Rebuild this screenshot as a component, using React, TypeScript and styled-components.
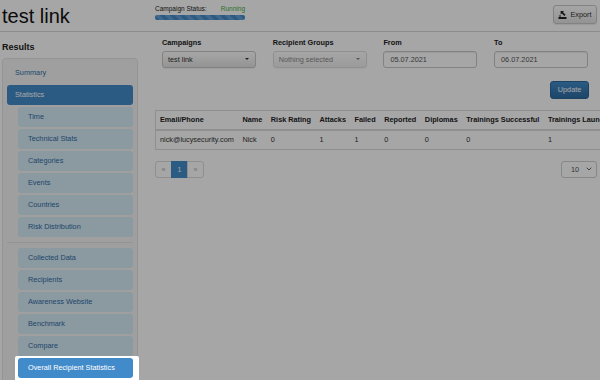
import React from "react";
import styled, { createGlobalStyle } from "styled-components";

const GlobalStyle = createGlobalStyle`
    html, body {
        margin: 0;
        padding: 0;
        background: #fff;
        overflow: hidden;
        font-family: "Liberation Sans", Arial, sans-serif;
        color: #333;
    }
`;

const Page = styled.div`
    width: 600px;
    min-height: 380px;
`;

const Header = styled.header`
    display: grid;
    grid-template-columns: 155px 1fr auto;
    align-items: start;
    height: 31px;
    border-bottom: 1px solid #d8d8d8;
`;

const Title = styled.h1`
    margin: 6px 0 0 2px;
    font-size: 20px;
    line-height: 20px;
    font-weight: normal;
    color: #111;
`;

const Status = styled.div`
    width: 90px;
    margin-top: 5px;
`;

const StatusRow = styled.div`
    display: flex;
    justify-content: space-between;
    font-size: 6.5px;
    line-height: 8px;
    color: #222;
`;

const Running = styled.span`
    color: #3fae3f;
`;

const ProgressBar = styled.div`
    margin-top: 1.5px;
    height: 5px;
    border-radius: 2px;
    background-color: #428bca;
    background-image: linear-gradient(
        45deg,
        rgba(255, 255, 255, 0.18) 25%,
        transparent 25%,
        transparent 50%,
        rgba(255, 255, 255, 0.18) 50%,
        rgba(255, 255, 255, 0.18) 75%,
        transparent 75%,
        transparent
    );
    background-size: 10px 10px;
`;

const ExportButton = styled.button`
    display: flex;
    align-items: center;
    justify-content: center;
    gap: 3px;
    width: 44px;
    height: 19px;
    margin: 5px 3px 0 0;
    padding: 0;
    border: 1px solid #c8c8c8;
    border-radius: 3px;
    background: linear-gradient(#fff, #e3e3e3);
    box-shadow: 0 1px 1px rgba(0, 0, 0, 0.08);
    font-family: inherit;
    font-size: 7.3px;
    color: #333;
`;

const Body = styled.div`
    display: grid;
    grid-template-columns: 155px 1fr;
`;

const Sidebar = styled.aside`
    padding-left: 2px;
    width: 136px;
`;

const SideTitle = styled.h4`
    margin: 9px 0 0;
    font-size: 9px;
    line-height: 12px;
    font-weight: bold;
    color: #222;
`;

const Panel = styled.nav`
    display: flex;
    flex-direction: column;
    gap: 2px;
    margin-top: 5px;
    padding: 4px 4px 6px;
    border: 1px solid #e3e3e3;
    border-radius: 4px;
    background: #f5f5f5;
`;

const NavItem = styled.div<{ $active?: boolean }>`
    height: 20px;
    line-height: 20px;
    padding-left: 8px;
    border-radius: 3px;
    font-size: 7.3px;
    white-space: nowrap;
    color: ${(p) => (p.$active ? "#fff" : "#2f6ea6")};
    background: ${(p) => (p.$active ? "#428bca" : "transparent")};
`;

const SubItem = styled(NavItem)`
    margin-left: 11px;
    padding-left: 10px;
    background: ${(p) => (p.$active ? "#428bca" : "#d6ebf6")};
`;

const Divider = styled.div`
    height: 1px;
    margin: 3px 0;
    background: #e4e4e4;
`;

const Highlight = styled.div`
    position: relative;
    z-index: 11;
    margin: -2px -6px -4px 8px;
    padding: 2px 6px 4px 3px;
    background: #fff;
    border-radius: 2px;

    & > ${SubItem} {
        margin-left: 0;
    }
`;

const Main = styled.main`
    overflow: hidden;
    padding-top: 6px;
`;

const Filters = styled.div`
    display: grid;
    grid-template-columns: repeat(4, 94px);
    column-gap: 16.7px;
    padding-left: 7px;
`;

const Label = styled.label`
    display: block;
    margin-bottom: 2.5px;
    font-size: 7.3px;
    line-height: 10px;
    font-weight: bold;
    color: #222;
`;

const SelectButton = styled.div<{ $disabled?: boolean }>`
    display: flex;
    align-items: center;
    justify-content: space-between;
    box-sizing: border-box;
    height: 17px;
    padding: 0 6px 0 5px;
    border: 1px solid #c8c8c8;
    border-radius: 3px;
    background: linear-gradient(#fff, #e4e4e4);
    box-shadow: 0 1px 1px rgba(0, 0, 0, 0.06);
    font-size: 7.3px;
    color: #333;
    opacity: ${(p) => (p.$disabled ? 0.6 : 1)};
`;

const Caret = styled.span`
    width: 0;
    height: 0;
    border-left: 2px solid transparent;
    border-right: 2px solid transparent;
    border-top: 2px solid #333;
`;

const Input = styled.div`
    display: flex;
    align-items: center;
    box-sizing: border-box;
    height: 17px;
    padding-left: 6px;
    border: 1px solid #c8c8c8;
    border-radius: 3px;
    background: #fff;
    box-shadow: inset 0 1px 1px rgba(0, 0, 0, 0.07);
    font-size: 7.3px;
    color: #555;
`;

const Actions = styled.div`
    display: flex;
    justify-content: flex-end;
    margin: 13.5px 11px 0 0;
`;

const UpdateButton = styled.button`
    height: 17.5px;
    padding: 0 6.7px;
    border: 1px solid #2b669a;
    border-radius: 3px;
    background: linear-gradient(#428bca, #2d6ca2);
    font-family: inherit;
    font-size: 7.3px;
    color: #fff;
`;

const TableWrap = styled.div`
    margin-top: 11px;
    width: max-content;
    border: 1px solid #dcdcdc;
    border-width: 1px 0 0 1px;
`;

const Table = styled.table`
    border-collapse: collapse;
    white-space: nowrap;
    font-size: 7.3px;

    th,
    td {
        height: 18px;
        padding: 0 4.3px;
        text-align: left;
        vertical-align: middle;
    }
    th:first-child,
    td:first-child {
        padding-left: 4px;
    }
    th {
        font-weight: bold;
        color: #222;
        border-bottom: 2px solid #dcdcdc;
    }
    td {
        color: #333;
        border-bottom: 1px solid #dcdcdc;
    }
`;

const Footer = styled.div`
    display: flex;
    justify-content: space-between;
    align-items: center;
    margin: 11px 3px 0 0;
`;

const Pagination = styled.div`
    display: flex;
`;

const PageCell = styled.span<{ $active?: boolean; $muted?: boolean }>`
    display: flex;
    align-items: center;
    justify-content: center;
    box-sizing: border-box;
    width: 17px;
    height: 17px;
    margin-left: -1px;
    border: 1px solid ${(p) => (p.$active ? "#428bca" : "#dcdcdc")};
    background: ${(p) => (p.$active ? "#428bca" : "#fff")};
    color: ${(p) => (p.$active ? "#fff" : p.$muted ? "#aaa" : "#428bca")};
    font-size: 7px;

    &:first-child {
        margin-left: 0;
        border-radius: 3px 0 0 3px;
    }
    &:last-child {
        border-radius: 0 3px 3px 0;
    }
`;

const PageSize = styled.div`
    display: flex;
    align-items: center;
    justify-content: space-between;
    box-sizing: border-box;
    width: 36px;
    height: 17px;
    padding: 0 4px 0 9px;
    border: 1px solid #cfcfcf;
    border-radius: 3px;
    background: #fff;
    font-size: 7.3px;
    color: #555;
`;

const Overlay = styled.div`
    position: fixed;
    inset: 0;
    z-index: 10;
    background: rgba(0, 0, 0, 0.35);
`;

const ExportIcon = () => (
    <svg width="9" height="8" viewBox="0 0 9 8">
        <path d="M2 0h4l-1 1.2 2.6 2.6-1.2 1.2L3.8 2.4 2.6 3.5V0z" fill="#222" />
        <rect x="0.5" y="6" width="8" height="2" fill="#222" />
        <rect x="1.5" y="4" width="1" height="2" fill="#222" />
    </svg>
);

const ChevronDown = () => (
    <svg width="6" height="4" viewBox="0 0 6 4">
        <path d="M0.7 0.7L3 3l2.3-2.3" stroke="#555" strokeWidth="0.9" fill="none" />
    </svg>
);

const statsItems = ["Time", "Technical Stats", "Categories", "Events", "Countries", "Risk Distribution"];
const dataItems = ["Collected Data", "Recipients", "Awareness Website", "Benchmark", "Compare"];

const columns = [
    "Email/Phone",
    "Name",
    "Risk Rating",
    "Attacks",
    "Failed",
    "Reported",
    "Diplomas",
    "Trainings Successful",
    "Trainings Launched",
];
const row = ["nick@lucysecurity.com", "Nick", "0", "1", "1", "0", "0", "0", "1"];

export default function App() {
    return (
        <Page>
            <GlobalStyle />
            <Header>
                <Title>test link</Title>
                <Status>
                    <StatusRow>
                        <span>Campaign Status:</span>
                        <Running>Running</Running>
                    </StatusRow>
                    <ProgressBar />
                </Status>
                <ExportButton>
                    <ExportIcon />
                    Export
                </ExportButton>
            </Header>
            <Body>
                <Sidebar>
                    <SideTitle>Results</SideTitle>
                    <Panel>
                        <NavItem>Summary</NavItem>
                        <NavItem $active>Statistics</NavItem>
                        {statsItems.map((item) => (
                            <SubItem key={item}>{item}</SubItem>
                        ))}
                        <Divider />
                        {dataItems.map((item) => (
                            <SubItem key={item}>{item}</SubItem>
                        ))}
                        <Highlight>
                            <SubItem $active>Overall Recipient Statistics</SubItem>
                        </Highlight>
                    </Panel>
                </Sidebar>
                <Main>
                    <Filters>
                        <div>
                            <Label>Campaigns</Label>
                            <SelectButton>
                                test link
                                <Caret />
                            </SelectButton>
                        </div>
                        <div>
                            <Label>Recipient Groups</Label>
                            <SelectButton $disabled>
                                Nothing selected
                                <Caret />
                            </SelectButton>
                        </div>
                        <div>
                            <Label>From</Label>
                            <Input>05.07.2021</Input>
                        </div>
                        <div>
                            <Label>To</Label>
                            <Input>06.07.2021</Input>
                        </div>
                    </Filters>
                    <Actions>
                        <UpdateButton>Update</UpdateButton>
                    </Actions>
                    <TableWrap>
                        <Table>
                            <thead>
                                <tr>
                                    {columns.map((c) => (
                                        <th key={c}>{c}</th>
                                    ))}
                                </tr>
                            </thead>
                            <tbody>
                                <tr>
                                    {row.map((v, i) => (
                                        <td key={i}>{v}</td>
                                    ))}
                                </tr>
                            </tbody>
                        </Table>
                    </TableWrap>
                    <Footer>
                        <Pagination>
                            <PageCell $muted>«</PageCell>
                            <PageCell $active>1</PageCell>
                            <PageCell $muted>»</PageCell>
                        </Pagination>
                        <PageSize>
                            10
                            <ChevronDown />
                        </PageSize>
                    </Footer>
                </Main>
            </Body>
            <Overlay />
        </Page>
    );
}
